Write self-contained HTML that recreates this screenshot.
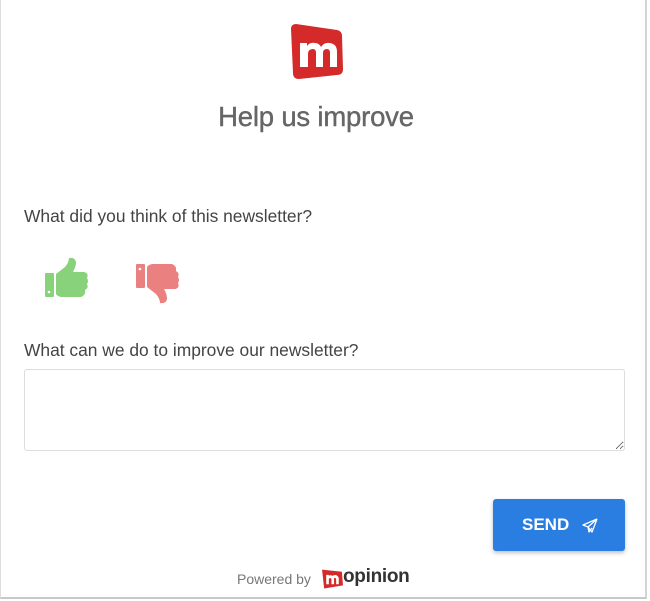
<!DOCTYPE html>
<html><head><meta charset="utf-8"><style>
*{margin:0;padding:0;box-sizing:border-box}
html,body{width:650px;height:601px;background:#fff;overflow:hidden;font-family:"Liberation Sans",sans-serif}
.frame{position:absolute;left:0;top:0;width:647px;height:599px;border-left:1px solid #ddd;border-right:2px solid #d4d4d4;border-bottom:2px solid #c8c8c8}
.abs{position:absolute}
h1{position:absolute;left:0;width:632px;text-align:center;top:101px;font-size:27.5px;font-weight:normal;color:#666;-webkit-text-stroke:0.4px #666;letter-spacing:-0.2px}
.q{position:absolute;left:24px;font-size:17.4px;color:#444}
textarea{position:absolute;left:24px;top:369px;width:601px;height:82px;border:1px solid #ddd;border-radius:3px;resize:both}
.btn{position:absolute;left:493px;top:499px;width:132px;height:52px;background:#2a7de1;border-radius:3px;box-shadow:0 2px 4px rgba(0,0,0,.25);color:#fff;font-weight:bold;font-size:17px}
.pw{position:absolute;left:237px;top:571px;font-size:14px;color:#777}
</style></head><body>
<div class="frame"></div>
<svg class="abs" style="left:287px;top:21px" width="60" height="60" viewBox="0 0 60 60">
<path d="M4 8 Q4 3 9 3 L50 9 Q55 10 55 15 L56 48 Q56 54 50 54 L12 58 Q6 58 6 52 Z" fill="#d42a2a"/>
<path d="M13 46 V22 H20 V25 Q23 21 28 22 Q32 22 34 26 Q37 21 43 22 Q50 23 50 31 V46 H43 V32 Q43 28 40 28 Q36 28 36 32 V46 H29 V32 Q29 28 26 28 Q21 28 21 33 V46 Z" fill="#fff"/>
</svg>
<h1>Help us improve</h1>
<div class="q" style="top:206px">What did you think of this newsletter?</div>
<svg class="abs" style="left:44px;top:257px" width="46" height="42" viewBox="0 0 46 42">
<rect x="1" y="16" width="9" height="24" rx="1" fill="#88d27c"/>
<circle cx="5" cy="35" r="1.3" fill="#fff"/>
<path d="M12 17 L21 10 Q25 5 25 1 Q31 0 32 5 Q32 10 29 15 L40 15 Q45 16 43 21 Q45 24 43 27 Q45 31 41 33 Q42 38 37 40 L17 40 Q13 39 12 37 Z" fill="#88d27c"/>
</svg>
<svg class="abs" style="left:135px;top:262px;transform:scaleY(-1)" width="46" height="42" viewBox="0 0 46 42">
<rect x="1" y="16" width="9" height="24" rx="1" fill="#ea8080"/>
<circle cx="5" cy="35" r="1.3" fill="#fff"/>
<path d="M12 17 L21 10 Q25 5 25 1 Q31 0 32 5 Q32 10 29 15 L40 15 Q45 16 43 21 Q45 24 43 27 Q45 31 41 33 Q42 38 37 40 L17 40 Q13 39 12 37 Z" fill="#ea8080"/>
</svg>
<div class="q" style="top:340px">What can we do to improve our newsletter?</div>
<textarea></textarea>
<div class="btn"><span class="abs" style="left:29px;top:16px">SEND</span>
<svg class="abs" style="left:89px;top:19px" width="16" height="15" viewBox="0 0 16 15"><path d="M15 1 L1 7 L6 9 L7 14 L10 10 M15 1 L6 9 M15 1 L10 14 L6 9" fill="none" stroke="#fff" stroke-width="1.3" stroke-linejoin="round"/></svg></div>
<div class="pw">Powered by</div>
<svg class="abs" style="left:321px;top:566px" width="23" height="24" viewBox="0 0 22 22"><path d="M1 3 L20 5 L21 18 L3 21 Z" fill="#d42a2a"/><path d="M5 17 V8 H7.5 V9 Q9 7.5 11 9 Q13 7.5 15 8.5 Q17 9.5 17 12 V17 H14.5 V12 Q14 10.5 12.5 11 V17 H10 V12 Q9.5 10.5 7.5 11.5 V17 Z" fill="#fff"/></svg>
<div class="abs" style="left:343px;top:566px;font-size:19px;color:#333;font-weight:bold;letter-spacing:-0.3px">opinion</div>
</body></html>
